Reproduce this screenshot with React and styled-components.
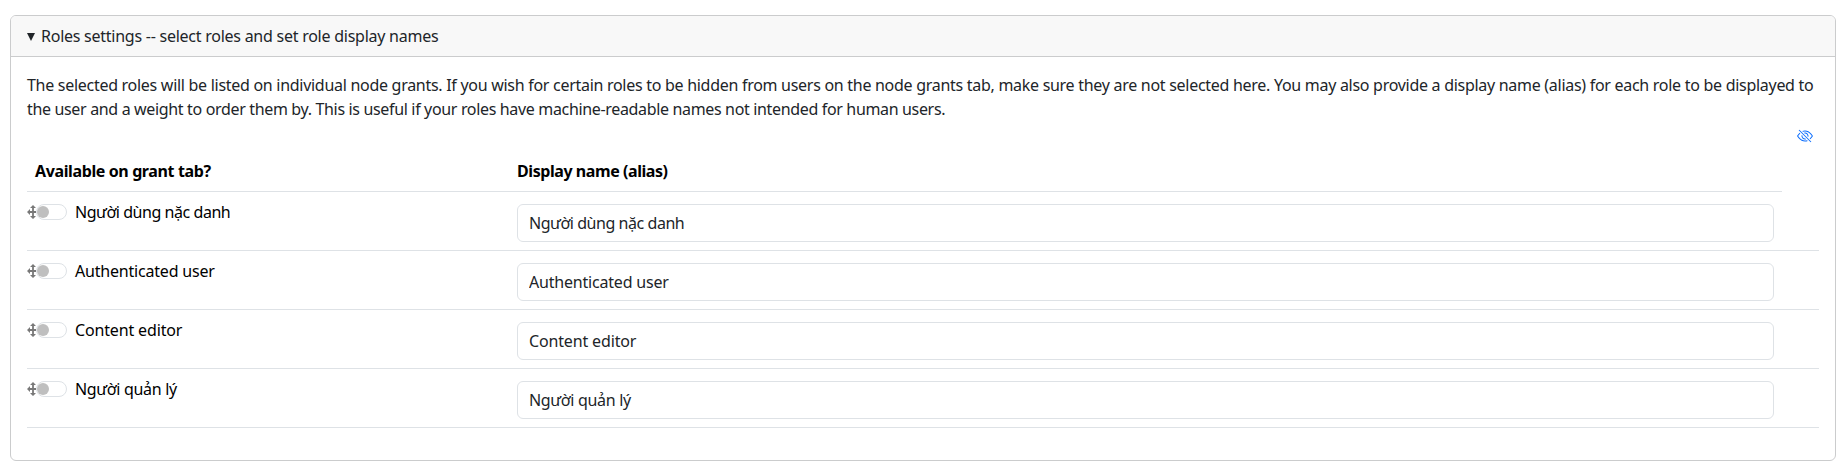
import React from "react";
import styled, { createGlobalStyle } from "styled-components";

const GlobalStyle = createGlobalStyle`
  *, *::before, *::after { box-sizing: border-box; }
  body {
    margin: 0;
    background: #fff;
    color: #212529;
    font-family: "Noto Sans", "Open Sans", sans-serif;
    font-size: 16px;
    line-height: 24px;
  }
`;

const Page = styled.main`
  padding: 15px 8px 4px 10px;
`;

const Card = styled.section`
  height: 446px;
  border: 1px solid #cbcccd;
  border-radius: 6px;
  overflow: hidden;
`;

const Summary = styled.header`
  display: flex;
  align-items: center;
  gap: 6px;
  height: 41px;
  padding: 0 16px;
  background: #f8f8f8;
  border-bottom: 1px solid #cbcccd;
`;

const Caret = styled.svg`
  width: 8px;
  height: 8px;
  margin-top: 2px;
  fill: #212529;
`;

const Body = styled.div`
  padding: 16px 16px 0;
`;

const Text = styled.span`
  display: block;
  white-space: nowrap;
  letter-spacing: ${(p) => p.$tracking || 0}px;
`;

const Description = styled.p`
  display: flex;
  flex-direction: column;
  align-items: flex-start;
  margin: 0;
`;

const WeightToggle = styled.button`
  display: flex;
  justify-content: flex-end;
  align-items: center;
  width: 100%;
  height: 30px;
  padding: 0 6px 1px 0;
  border: 0;
  background: none;
  color: #0d6efd;
`;

const columns = "482px 1265px 1fr";

const HeadRow = styled.div`
  display: grid;
  grid-template-columns: ${columns};
  width: 1755px;
  height: 41px;
  padding-top: 8px;
  border-bottom: 1px solid #dee2e6;
  color: #000;
  font-weight: 700;
`;

const HeadCell = styled.div`
  padding: 0 8px;
`;

const Row = styled.div`
  display: grid;
  grid-template-columns: ${columns};
  width: 1792px;
  height: 59px;
  border-bottom: 1px solid #dee2e6;
`;

const RoleCell = styled.div`
  display: flex;
  align-items: center;
  height: 24px;
  margin-top: 8px;
  color: #000;
`;

const Handle = styled.svg`
  flex: none;
  width: 9px;
  height: 14px;
  fill: none;
  stroke: #787878;
`;

const Switch = styled.span`
  display: flex;
  align-items: center;
  width: 31px;
  height: 16px;
  margin-right: 8px;
  border: 1px solid #dee2e6;
  border-radius: 8px;

  &::before {
    content: "";
    width: 12px;
    height: 12px;
    border-radius: 50%;
    background: #bfbfbf;
  }
`;

const AliasCell = styled.div`
  padding: 12px 0 0 8px;
`;

const AliasInput = styled.input`
  display: block;
  width: 1257px;
  height: 38px;
  padding: 6px 12px 6px 11px;
  border: 1px solid #dee2e6;
  border-radius: 6px;
  background: #fff;
  color: #212529;
  font: inherit;
  letter-spacing: ${(p) => p.$tracking || 0}px;
`;

const roles = [
  { name: "Người dùng nặc danh", tracking: -0.45 },
  { name: "Authenticated user", tracking: -0.2 },
  { name: "Content editor", tracking: -0.15 },
  { name: "Người quản lý", tracking: -0.32 },
];

function MoveHandle() {
  return (
    <Handle viewBox="0 0 9 14">
      <path d="M6 1.5v11M1.5 7H9" strokeWidth="1.8" />
      <path d="M6 0l3 3H3zM6 14l3-3H3zM0 7l3-3v6z" fill="#787878" stroke="none" />
    </Handle>
  );
}

function HiddenIcon() {
  return (
    <svg width="16" height="16" viewBox="0 0 16 16" fill="currentColor">
      <path d="M13.359 11.238C15.06 9.72 16 8 16 8s-3-5.5-8-5.5a7 7 0 0 0-2.79.588l.77.771A6 6 0 0 1 8 3.5c2.12 0 3.879 1.168 5.168 2.457A13 13 0 0 1 14.828 8q-.086.13-.195.288c-.335.48-.83 1.12-1.465 1.755q-.247.248-.517.486z" />
      <path d="M11.297 9.176a3.5 3.5 0 0 0-4.474-4.474l.823.823a2.5 2.5 0 0 1 2.829 2.829zm-2.943 1.299.822.822a3.5 3.5 0 0 1-4.474-4.474l.823.823a2.5 2.5 0 0 0 2.829 2.829" />
      <path d="M3.35 5.47q-.27.24-.518.487A13 13 0 0 0 1.172 8l.195.288c.335.48.83 1.12 1.465 1.755C4.121 11.332 5.881 12.5 8 12.5c.716 0 1.39-.133 2.02-.36l.77.772A7 7 0 0 1 8 13.5C3 13.5 0 8 0 8s.939-1.721 2.641-3.238l.708.709zm10.296 8.884-12-12 .708-.708 12 12z" />
    </svg>
  );
}

export default function App() {
  return (
    <Page>
      <GlobalStyle />
      <Card>
        <Summary>
          <Caret viewBox="0 0 8 8"><path d="M0 0h8L4 8z" /></Caret>
          <Text $tracking={-0.25}>Roles settings -- select roles and set role display names</Text>
        </Summary>
        <Body>
          <Description>
            <Text $tracking={-0.284}>
              The selected roles will be listed on individual node grants. If you wish for certain roles to be hidden from users on the node grants tab, make sure they are not selected here. You may also provide a display name (alias) for each role to be displayed to
            </Text>
            <Text $tracking={-0.34}>
              the user and a weight to order them by. This is useful if your roles have machine-readable names not intended for human users.
            </Text>
          </Description>
          <WeightToggle aria-label="Show row weights"><HiddenIcon /></WeightToggle>
          <HeadRow>
            <HeadCell><Text $tracking={-0.38}>Available on grant tab?</Text></HeadCell>
            <HeadCell><Text $tracking={-0.43}>Display name (alias)</Text></HeadCell>
          </HeadRow>
          {roles.map((role) => (
            <Row key={role.name}>
              <RoleCell>
                <MoveHandle />
                <Switch role="switch" aria-checked="false" />
                <Text $tracking={role.tracking}>{role.name}</Text>
              </RoleCell>
              <AliasCell>
                <AliasInput defaultValue={role.name} $tracking={role.tracking} />
              </AliasCell>
            </Row>
          ))}
        </Body>
      </Card>
    </Page>
  );
}
